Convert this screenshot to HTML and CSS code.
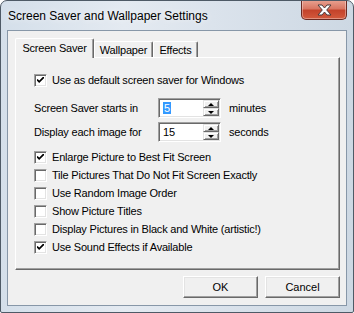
FILE: index.html
```html
<!DOCTYPE html>
<html lang="en">
<head>
  <meta charset="UTF-8">
  <title>Screen Saver and Wallpaper Settings</title>
  <link rel="stylesheet" href="styles.css">
</head>
<body>
  <div class="window">
    <div class="titlebar">
      <span class="title">Screen Saver and Wallpaper Settings</span>
      <button class="close">
        <svg width="15" height="12" viewBox="0 0 15 12">
          <path d="M1 1h4l2.5 3L10 1h4l-4.3 5 4.3 5h-4l-2.5-3L5 11H1l4.3-5z" fill="#fff" stroke="#4a3a3a" stroke-width="1"/>
        </svg>
      </button>
    </div>
    <div class="client">
      <div class="tabs">
        <div class="tab active">Screen Saver</div>
        <div class="tab wallpaper">Wallpaper</div>
        <div class="tab effects">Effects</div>
      </div>
      <div class="panel">
        <div class="check-row"><span class="box"><svg width="7" height="7" viewBox="0 0 7 7"><path d="M0 2.5l2.2 2.3L7 0" fill="none" stroke="#000" stroke-width="1.8"/></svg></span>Use as default screen saver for Windows</div>

        <div class="spin-row first">
          <span class="spin-label">Screen Saver starts in</span>
          <span class="spin">
            <span class="spin-value"><span class="selected">5</span></span>
            <span class="spin-buttons">
              <span class="arrow up"></span>
              <span class="arrow down"></span>
            </span>
          </span>
          <span class="unit">minutes</span>
        </div>
        <div class="spin-row">
          <span class="spin-label">Display each image for</span>
          <span class="spin">
            <span class="spin-value">15</span>
            <span class="spin-buttons">
              <span class="arrow up"></span>
              <span class="arrow down"></span>
            </span>
          </span>
          <span class="unit">seconds</span>
        </div>

        <div class="check-list">
          <div class="check-row"><span class="box"><svg width="7" height="7" viewBox="0 0 7 7"><path d="M0 2.5l2.2 2.3L7 0" fill="none" stroke="#000" stroke-width="1.8"/></svg></span>Enlarge Picture to Best Fit Screen</div>
          <div class="check-row"><span class="box"></span>Tile Pictures That Do Not Fit Screen Exactly</div>
          <div class="check-row"><span class="box"></span>Use Random Image Order</div>
          <div class="check-row"><span class="box"></span>Show Picture Titles</div>
          <div class="check-row"><span class="box"></span>Display Pictures in Black and White (artistic!)</div>
          <div class="check-row"><span class="box"><svg width="7" height="7" viewBox="0 0 7 7"><path d="M0 2.5l2.2 2.3L7 0" fill="none" stroke="#000" stroke-width="1.8"/></svg></span>Use Sound Effects if Available</div>
        </div>
      </div>
      <div class="buttons">
        <button class="btn">OK</button>
        <button class="btn">Cancel</button>
      </div>
    </div>
  </div>
</body>
</html>
```

FILE: styles.css
```css
* { box-sizing: border-box; }
body {
  margin: 0;
  background: #fff;
  font-family: 'Liberation Sans', Arial, sans-serif;
}
.window {
  width: 354px;
  height: 313px;
  border: 1px solid #4e5a66;
  border-radius: 7px 7px 2px 2px;
  background: linear-gradient(to right, #d4dfea 0%, #e4eaf1 35%, #dbe3ec 60%, #cdd8e3 100%);
  overflow: hidden;
}
.titlebar {
  height: 29px;
  display: flex;
  align-items: center;
  padding-left: 7px;
}
.title {
  font-size: 12px;
  color: #000;
  text-shadow: 0 0 6px rgba(255,255,255,0.9);
  padding-top: 1px;
}
.close {
  margin-left: auto;
  margin-right: 6px;
  margin-top: -1px;
  align-self: flex-start;
  width: 46px;
  height: 20px;
  border: 1px solid #6b2a22;
  border-top: none;
  border-radius: 0 0 5px 5px;
  background: linear-gradient(to bottom, #e9a392 0%, #d97763 45%, #c4432b 55%, #d35a3d 100%);
  box-shadow: inset 0 0 0 1px rgba(255,255,255,0.35);
  display: flex;
  align-items: center;
  justify-content: center;
  padding: 0;
}
.client {
  margin-left: 6px;
  width: 340px;
  height: 276px;
  border: 1px solid #8797a8;
  background: #f0f0f0;
  padding: 7px 6px 0 7px;
  font-size: 11px;
  letter-spacing: -0.2px;
  color: #000;
}
.tabs {
  display: flex;
  align-items: flex-end;
  height: 19px;
}
.tab {
  flex: none;
  height: 16px;
  border: 1px solid #fff;
  border-right-color: #696969;
  border-bottom: none;
  border-radius: 2px 2px 0 0;
  box-shadow: inset -1px 0 0 #a0a0a0;
  background: #f0f0f0;
  display: flex;
  align-items: center;
  justify-content: center;
}
.tab.active {
  width: 79px;
  height: 20px;
  margin-bottom: -1px;
  position: relative;
  z-index: 1;
  padding-bottom: 1px;
}
.tab.wallpaper { width: 59px; }
.tab.effects { width: 45px; }
.panel {
  height: 213px;
  border: 1px solid;
  border-color: #fff #696969 #696969 #fff;
  box-shadow: inset -1px -1px 0 #a0a0a0;
  padding: 13px 0 0 18px;
}
.check-row {
  height: 18px;
  display: flex;
  align-items: center;
  gap: 5px;
}
.box {
  width: 13px;
  height: 13px;
  flex: none;
  background: #fff;
  border: 1px solid;
  border-color: #a0a0a0 #fff #fff #a0a0a0;
  box-shadow: inset 1px 1px 0 #696969, inset -1px -1px 0 #e3e3e3;
  display: flex;
  align-items: center;
  justify-content: center;
}
.spin-row {
  height: 20px;
  display: flex;
  align-items: center;
  margin-top: 4px;
}
.spin-row.first { margin-top: 9px; }
.spin-label {
  width: 124px;
  flex: none;
}
.spin {
  width: 63px;
  height: 20px;
  display: flex;
  background: #fff;
  border: 1px solid;
  border-color: #a0a0a0 #fff #fff #a0a0a0;
  box-shadow: inset 1px 1px 0 #696969, inset -1px -1px 0 #e3e3e3;
  padding: 1px;
}
.spin-value {
  flex: 1;
  display: flex;
  align-items: center;
  padding-left: 3px;
}
.selected {
  background: #3399ff;
  color: #fff;
  padding: 0 1px;
}
.spin-buttons {
  width: 16px;
  display: flex;
  flex-direction: column;
}
.arrow {
  flex: 1;
  background: #f0f0f0;
  border: 1px solid;
  border-color: #e3e3e3 #696969 #696969 #e3e3e3;
  box-shadow: inset 1px 1px 0 #fff, inset -1px -1px 0 #a0a0a0;
  display: flex;
  align-items: center;
  justify-content: center;
}
.arrow::after {
  content: '';
  border-left: 3px solid transparent;
  border-right: 3px solid transparent;
}
.arrow.up::after { border-bottom: 3px solid #000; }
.arrow.down::after { border-top: 3px solid #000; }
.unit { margin-left: 8px; }
.check-list { margin-top: 6px; }
.buttons {
  display: flex;
  justify-content: flex-end;
  gap: 7px;
  margin-top: 6px;
}
.btn {
  width: 75px;
  height: 22px;
  font-family: inherit;
  font-size: 11px;
  color: #000;
  background: #f0f0f0;
  border: 1px solid;
  border-color: #fff #696969 #696969 #fff;
  box-shadow: inset -1px -1px 0 #a0a0a0, inset 1px 1px 0 #e3e3e3;
  padding: 0;
}
```
